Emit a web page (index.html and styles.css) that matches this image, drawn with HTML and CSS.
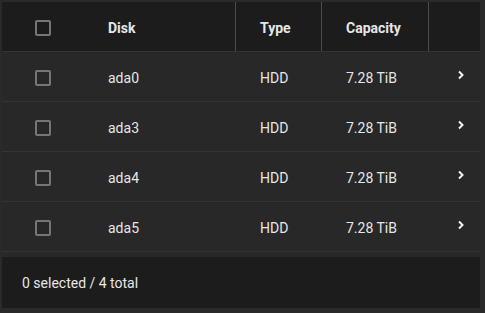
FILE: index.html
```html
<!DOCTYPE html>
<html lang="en">
<head>
    <meta charset="UTF-8">
    <title>Disks</title>
    <link rel="stylesheet" href="styles.css">
</head>
<body>
    <div class="panel">
        <div class="grid head">
            <div class="cell check"><span class="box"></span></div>
            <div class="cell divided">Disk</div>
            <div class="cell divided">Type</div>
            <div class="cell divided">Capacity</div>
            <div class="cell"></div>
        </div>
        <div class="grid row">
            <div class="cell check"><span class="box"></span></div>
            <div class="cell">ada0</div>
            <div class="cell">HDD</div>
            <div class="cell">7.28 TiB</div>
            <div class="cell arrow"><svg width="8" height="10" viewBox="0 0 8 10"><path d="M2 1.5 L5.5 5 L2 8.5" fill="none" stroke="#f2f2f2" stroke-width="2"/></svg></div>
        </div>
        <div class="grid row">
            <div class="cell check"><span class="box"></span></div>
            <div class="cell">ada3</div>
            <div class="cell">HDD</div>
            <div class="cell">7.28 TiB</div>
            <div class="cell arrow"><svg width="8" height="10" viewBox="0 0 8 10"><path d="M2 1.5 L5.5 5 L2 8.5" fill="none" stroke="#f2f2f2" stroke-width="2"/></svg></div>
        </div>
        <div class="grid row">
            <div class="cell check"><span class="box"></span></div>
            <div class="cell">ada4</div>
            <div class="cell">HDD</div>
            <div class="cell">7.28 TiB</div>
            <div class="cell arrow"><svg width="8" height="10" viewBox="0 0 8 10"><path d="M2 1.5 L5.5 5 L2 8.5" fill="none" stroke="#f2f2f2" stroke-width="2"/></svg></div>
        </div>
        <div class="grid row">
            <div class="cell check"><span class="box"></span></div>
            <div class="cell">ada5</div>
            <div class="cell">HDD</div>
            <div class="cell">7.28 TiB</div>
            <div class="cell arrow"><svg width="8" height="10" viewBox="0 0 8 10"><path d="M2 1.5 L5.5 5 L2 8.5" fill="none" stroke="#f2f2f2" stroke-width="2"/></svg></div>
        </div>
        <div class="footer">0 selected / 4 total</div>
    </div>
</body>
</html>
```

FILE: styles.css
```css
body {
    margin: 0;
    padding: 0;
    background-color: #2a2a2a;
    font-family: Roboto, "Liberation Sans", sans-serif;
    font-size: 14px;
    color: #e6e6e6;
}
.panel {
    width: 478px;
    margin: 2px 5px 5px 2px;
    background-color: #282828;
}
.grid {
    display: grid;
    grid-template-columns: 82px 152px 86px 107px 1fr;
}
.head {
    height: 49px;
    background-color: #1c1c1c;
    border-bottom: 1px solid #343434;
    font-weight: 700;
}
.row {
    height: 49px;
    border-bottom: 1px solid #343434;
}
.cell {
    display: flex;
    align-items: center;
    padding-left: 24px;
    padding-top: 2px;
}
.divided {
    border-right: 1px solid #4a4a4a;
}
.check {
    padding-left: 0;
    justify-content: center;
}
.box {
    width: 12px;
    height: 12px;
    border: 2px solid #767676;
    border-radius: 2px;
}
.arrow {
    padding-left: 28px;
    padding-top: 0;
    padding-bottom: 4px;
}
.footer {
    height: 51px;
    margin-top: 5px;
    padding-left: 20px;
    display: flex;
    align-items: center;
    background-color: #1c1c1c;
}
```
